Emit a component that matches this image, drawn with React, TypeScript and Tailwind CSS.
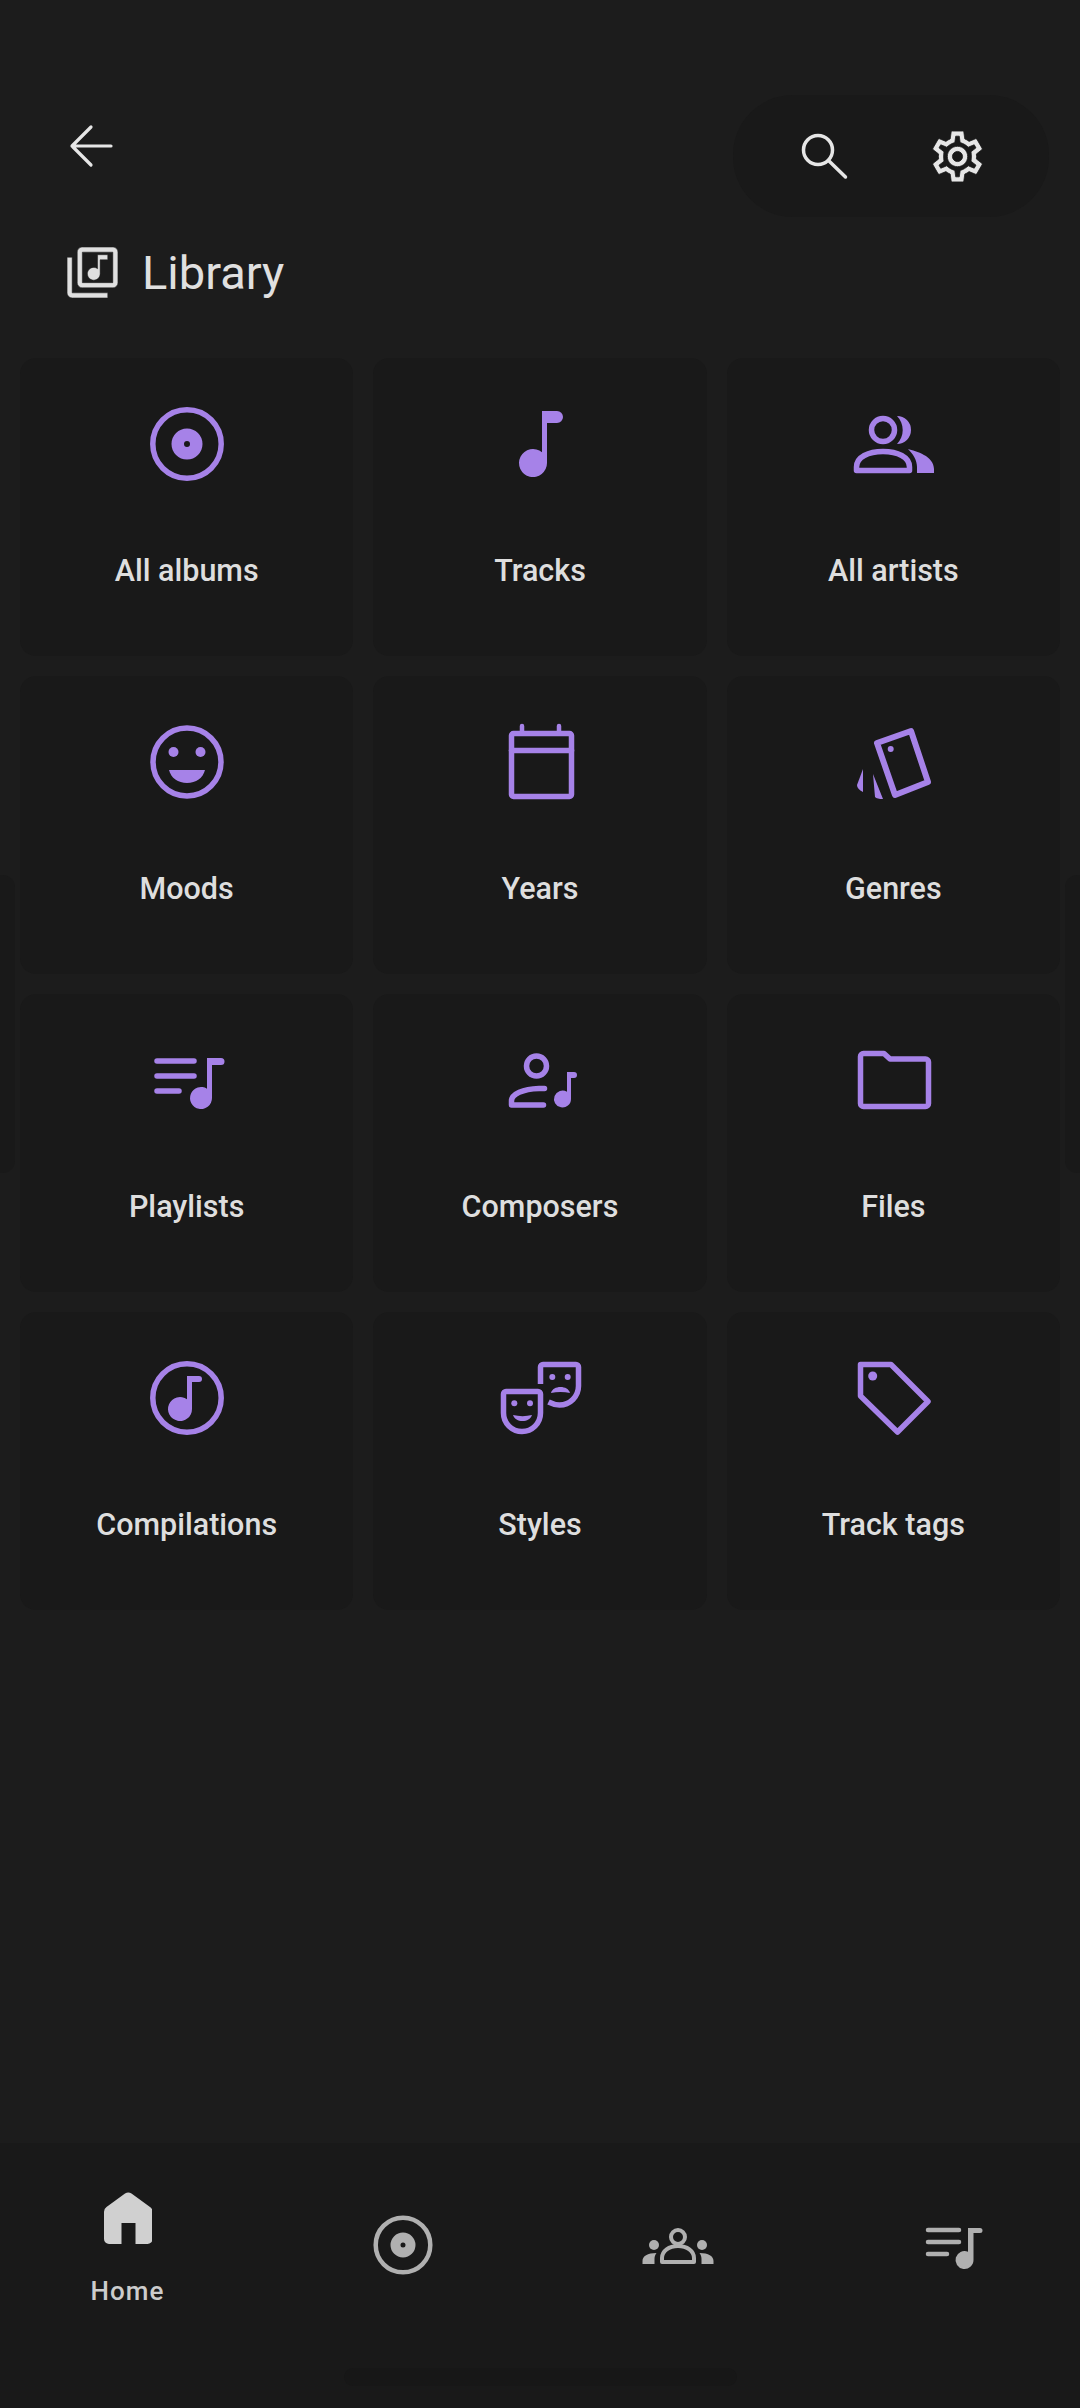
import type { ReactNode } from 'react'

const ring = (r: number, w: number) => <circle cx="48" cy="48" r={r} fill="none" stroke="currentColor" strokeWidth={w} />
const line = { fill: 'none', stroke: 'currentColor', strokeWidth: 5.5, strokeLinecap: 'round', strokeLinejoin: 'round' } as const

const Album = () => (
  <>
    {ring(34.2, 5.5)}
    <circle cx="48" cy="48" r="9.250" fill="none" stroke="currentColor" strokeWidth="12.500" />
  </>
)

const ICONS: Record<string, ReactNode> = {
  albums: <Album />,
  tracks: <path fill="currentColor" d="M50 15h15a6 6 0 0 1 0 12H55v40a14 14 0 1 1-5-10.700z" />,
  artists: (
    <>
      <circle cx="38" cy="34" r="11.500" {...line} />
      <path fill="currentColor" d="M52 20a14 14 0 0 1 0 28 20 20 0 0 0 0-28z" />
      <path d="M11.500 74.500V71c0-10 12-15.500 26.500-15.500S64.500 61 64.500 71v3.500z" {...line} />
      <path fill="currentColor" d="M63 53c8 2 26 7 26 20v4H72v-6c0-7-4-13-9-18z" />
    </>
  ),
  moods: (
    <>
      {ring(34, 5.5)}
      <ellipse cx="34.500" cy="38" rx="5" ry="5" fill="currentColor" />
      <ellipse cx="61.500" cy="38" rx="5" ry="5" fill="currentColor" />
      <path fill="currentColor" d="M30 56h36c-2 8-9 13-18 13s-16-5-18-13z" />
    </>
  ),
  years: (
    <>
      <rect x="19.500" y="19.500" width="60" height="63" rx="2" {...line} />
      <path d="M19.500 36.500h60" {...line} />
      <path d="M30 12v6M67 12v6" {...line} strokeWidth={4.500} />
    </>
  ),
  genres: (
    <>
      <path d="M32 29 66 17 83 68 50 81z" {...line} strokeWidth={6} />
      <circle cx="45.700" cy="35" r="3" fill="currentColor" />
      <path fill="currentColor" d="M18 55 12 71q0 4 6 7zM28 60l10 25q-6 0-8-2z" />
    </>
  ),
  playlists: (
    <>
      <path d="M18 29h37M18 44h37M18 59h22" {...line} />
      <path fill="currentColor" d="M68 26h14a3.500 3.500 0 0 1 0 7h-9v33a11 11 0 1 1-5-9.200z" />
    </>
  ),
  composers: (
    <>
      <circle cx="44.500" cy="34" r="10" {...line} />
      <path d="M52.500 56.500H47C31 57 19.500 62 19.500 69v4h32" {...line} />
      <path fill="currentColor" d="M75 40h7a3 3 0 0 1 0 6h-3v21a8.500 8.500 0 1 1-4-7.200z" />
    </>
  ),
  files: <path {...line} d="M18.500 21.500H39l6 5.500h35.500a3 3 0 0 1 3 3V71.500a3 3 0 0 1-3 3h-62a3 3 0 0 1-3-3v-47a3 3 0 0 1 3-3z" />,
  compilations: (
    <>
      {ring(34.2, 5.5)}
      <path fill="currentColor" d="M48 26h12a3 3 0 0 1 0 6h-7v27a12 12 0 1 1-5-9.700z" />
    </>
  ),
  styles: (
    <>
      <path {...line} d="M14 41.500h32a2.500 2.500 0 0 1 2.500 2.500v19a18.500 18.500 0 0 1-37 0V44a2.500 2.500 0 0 1 2.500-2.500z" />
      <circle cx="22.300" cy="53.300" r="3" fill="currentColor" />
      <circle cx="38" cy="53.300" r="3" fill="currentColor" />
      <path fill="currentColor" d="M21 65c6 1.500 13 1.500 19 0-1.500 4-5 6-9.500 6s-8-2-9.500-6z" />
      <path {...line} strokeLinecap="butt" d="M48.500 34V17a2.500 2.500 0 0 1 2.500-2.500h33a2.500 2.500 0 0 1 2.500 2.500v19a19 19 0 0 1-19 19c-4 0-7-1-11-3" />
      <circle cx="60.300" cy="27" r="3" fill="currentColor" />
      <circle cx="75.700" cy="27" r="3" fill="currentColor" />
      <path fill="currentColor" d="M59 43c1-4 5-6 9.500-6s8.500 2 9.500 6c-6-1.500-13-1.500-19 0z" />
    </>
  ),
  tags: (
    <>
      <path {...line} d="M15.500 14.500H46L83 51.500 52.500 82 15.500 46z" />
      <circle cx="27.700" cy="26" r="4.500" fill="currentColor" />
    </>
  ),
}

const ITEMS = [
  ['albums', 'All albums'], ['tracks', 'Tracks'], ['artists', 'All artists'],
  ['moods', 'Moods'], ['years', 'Years'], ['genres', 'Genres'],
  ['playlists', 'Playlists'], ['composers', 'Composers'], ['files', 'Files'],
  ['compilations', 'Compilations'], ['styles', 'Styles'], ['tags', 'Track tags'],
]

function Box({ children }: { children: ReactNode }) {
  return <svg viewBox="0 0 96 96" className="w-24 h-24 shrink-0">{children}</svg>
}

function Card({ id, label }: { id: string; label: string }) {
  return (
    <div className="flex flex-col items-center pt-[38px] bg-[#191919] rounded-2xl">
      <div className="text-[#a682e8]"><Box>{ICONS[id]}</Box></div>
      <p className="mt-[61px] text-[30.500px] leading-9 font-medium text-[#dedede]">{label}</p>
    </div>
  )
}

function BottomNav() {
  return (
    <nav className="mt-auto h-[265px] shrink-0 bg-[#191919] grid grid-cols-[repeat(4,275px)] justify-center text-[#b0b0b0]">
      <div className="flex flex-col items-center pt-[49px]">
        <svg viewBox="0 0 48 52" className="w-12 h-[52px] text-[#d0d0d0]">
          <path fill="currentColor" d="M21 1.500a6 6 0 0 1 6.500 0L46 15a6 6 0 0 1 2.500 5v27a5 5 0 0 1-5 5H31.500V31h-14v21H5a5 5 0 0 1-5-5V20a6 6 0 0 1 2.500-5z" />
        </svg>
        <span className="mt-[31px] text-[26px] leading-8 font-medium tracking-[1px] text-[#cccccc]">Home</span>
      </div>
      <div className="flex justify-center pt-[54px]">
        <Box>
          {ring(27.3, 4.5)}
          <circle cx="48" cy="48" r="7.500" fill="none" stroke="currentColor" strokeWidth="10" />
        </Box>
      </div>
      <div className="flex justify-center pt-[55px]">
        <Box>
          <circle cx="48" cy="39" r="7" {...line} strokeWidth={4} />
          <circle cx="24" cy="47" r="5" fill="currentColor" />
          <circle cx="72" cy="47" r="5" fill="currentColor" />
          <path d="M32 64v-4c0-7 7-12 16-12s16 5 16 12v4z" {...line} strokeWidth={4} />
          <path fill="currentColor" d="M12.500 66v-3c0-5 5-8 14-8-1.500 2-2 4-2 6v5zM83.500 66v-3c0-5-5-8-14-8 1.500 2 2 4 2 6v5z" />
        </Box>
      </div>
      <div className="flex justify-center pt-[57px]">
        <Box>
          <path d="M23 30h31M23 42h31M23 54h19" {...line} strokeWidth={4.500} />
          <path fill="currentColor" d="M63 28h12a2.500 2.500 0 0 1 0 5h-6.500v27a9 9 0 1 1-5.500-8.300z" />
        </Box>
      </div>
    </nav>
  )
}

export default function App() {
  return (
    <div className="relative flex flex-col w-[1080px] h-[2408px] overflow-hidden bg-[#1c1c1c] font-[Roboto,sans-serif]">
      <header className="flex items-start justify-between pt-[95px] pl-[67px] pr-[31px]">
        <svg viewBox="0 0 48 48" className="w-12 h-12 mt-[27px] text-[#e6e6e6]">
          <path d="M44 24H5M24 5 5 24l19 19" fill="none" stroke="currentColor" strokeWidth="3.200" strokeLinecap="round" strokeLinejoin="round" />
        </svg>
        <div className="flex items-center w-[316px] h-[122px] pl-[67px] gap-[79px] rounded-[60px] bg-[#191919] text-[#e6e6e6]">
          <svg viewBox="0 0 48 48" className="w-12 h-12">
            <circle cx="18" cy="18" r="14.500" fill="none" stroke="currentColor" strokeWidth="3.500" />
            <path d="M28.500 28.500 45.500 45" fill="none" stroke="currentColor" strokeWidth="3.500" strokeLinecap="round" />
          </svg>
          <svg viewBox="0 0 24 24" className="w-[61px] h-[61px]">
            <path fill="currentColor" stroke="#191919" strokeWidth="0.300" d="M19.43 12.98c.04-.32.07-.64.07-.98 0-.34-.03-.66-.07-.98l2.11-1.65c.19-.15.24-.42.12-.64l-2-3.46c-.09-.16-.26-.25-.44-.25-.06 0-.12.01-.17.03l-2.49 1c-.52-.4-1.08-.73-1.69-.98l-.38-2.65C14.46 2.18 14.25 2 14 2h-4c-.25 0-.46.18-.49.42l-.38 2.65c-.61.25-1.17.59-1.69.98l-2.49-1c-.06-.02-.12-.03-.18-.03-.17 0-.34.09-.43.25l-2 3.46c-.13.22-.07.49.12.64l2.11 1.65c-.04.32-.07.65-.07.98 0 .33.03.66.07.98l-2.11 1.65c-.19.15-.24.42-.12.64l2 3.46c.09.16.26.25.44.25.06 0 .12-.01.17-.03l2.49-1c.52.4 1.08.73 1.69.98l.38 2.65c.03.24.24.42.49.42h4c.25 0 .46-.18.49-.42l.38-2.65c.61-.25 1.17-.59 1.69-.98l2.49 1c.06.02.12.03.18.03.17 0 .34-.09.43-.25l2-3.46c.12-.22.07-.49-.12-.64l-2.11-1.65zm-1.98-1.71c.04.31.05.52.05.73 0 .21-.02.43-.05.73l-.14 1.13.89.7 1.08.84-.7 1.21-1.27-.51-1.04-.42-.9.68c-.43.32-.84.56-1.25.73l-1.06.43-.16 1.13-.2 1.35h-1.4l-.19-1.35-.16-1.13-1.06-.43c-.43-.18-.83-.41-1.23-.71l-.91-.7-1.06.43-1.27.51-.7-1.21 1.08-.84.89-.7-.14-1.13c-.03-.31-.05-.54-.05-.74s.02-.43.05-.73l.14-1.13-.89-.7-1.08-.84.7-1.21 1.27.51 1.04.42.9-.68c.43-.32.84-.56 1.25-.73l1.06-.43.16-1.13.2-1.35h1.39l.19 1.35.16 1.13 1.06.43c.43.18.83.41 1.23.71l.91.7 1.06-.43 1.27-.51.7 1.21-1.07.85-.89.7.14 1.13zM12 8c-2.21 0-4 1.79-4 4s1.79 4 4 4 4-1.79 4-4-1.79-4-4-4zm0 6c-1.100 0-2-.9-2-2s.9-2 2-2 2 .9 2 2-.9 2-2 2z" />
          </svg>
        </div>
      </header>

      <div className="flex items-center gap-[19px] mt-[25px] pl-[62px] text-[#e0e0e0]">
        <svg viewBox="0 0 24 24" className="w-[61px] h-[61px]">
          <path fill="currentColor" stroke="#1c1c1c" strokeWidth="0.200" d="M20 2H8c-1.100 0-2 .9-2 2v12c0 1.100.9 2 2 2h12c1.100 0 2-.9 2-2V4c0-1.100-.9-2-2-2zm0 14H8V4h12v12zm-7.500-1c1.380 0 2.500-1.120 2.500-2.500V7h3V5h-4v5.510c-.42-.32-.93-.51-1.500-.51-1.380 0-2.500 1.120-2.500 2.500s1.120 2.500 2.500 2.500zM4 6H2v14c0 1.100.9 2 2 2h14v-2H4V6z" />
        </svg>
        <h1 className="text-[47px] leading-[61px] font-normal">Library</h1>
      </div>

      <main className="grid grid-cols-3 auto-rows-[298px] gap-5 mt-[55px] px-5">
        {ITEMS.map(([id, label]) => <Card key={id} id={id} label={label} />)}
      </main>

      <BottomNav />

      <div className="absolute left-0 top-[875px] w-[15px] h-[298px] rounded-r-xl bg-[#191919]" />
      <div className="absolute right-0 top-[875px] w-[15px] h-[298px] rounded-l-xl bg-[#191919]" />
      <div className="absolute left-[344px] top-[2368px] w-[393px] h-[18px] rounded-full bg-[#171717]" />
    </div>
  )
}
